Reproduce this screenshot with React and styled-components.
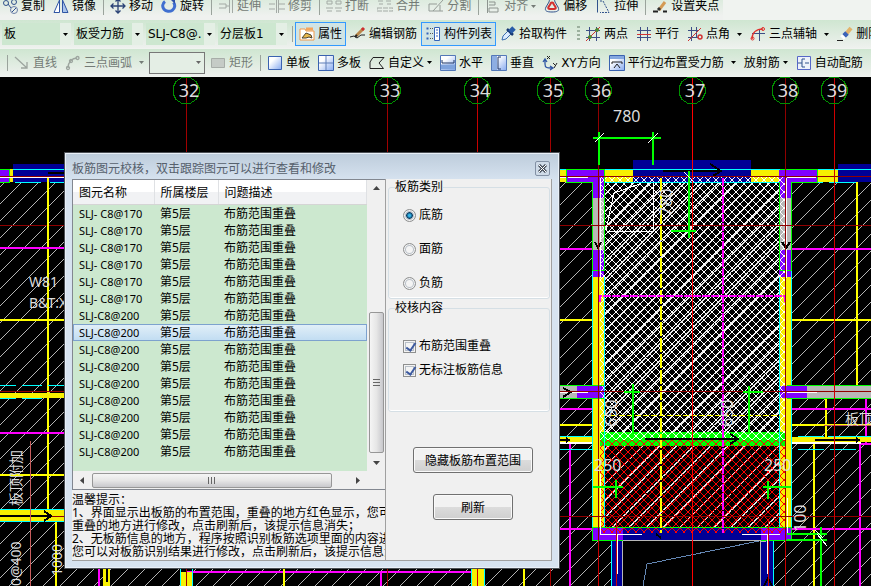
import React from "react";
import styled, { createGlobalStyle, css } from "styled-components";

const icons = {
  copy: (
    <g fill="none" stroke="#31528c">
      <circle cx="4" cy="5" r="2.5" />
      <circle cx="12" cy="4" r="2.5" />
      <circle cx="12" cy="12" r="3.5" stroke="#6b7fa8" />
      <path d="M6 6l3 4M10 14l4-4" />
    </g>
  ),
  mirror: (
    <g fill="#fff" stroke="#2f55a4">
      <path d="M6.5 2v12.5H1z" />
      <path d="M9.5 2v12.5H15z" fill="#a9c4ea" />
    </g>
  ),
  move: (
    <path
      d="M8 1v14M1 8h14M5.500 3.500L8 1l2.500 2.500M5.500 12.500L8 15l2.500-2.500M3.500 5.500L1 8l2.500 2.500M12.500 5.500L15 8l-2.500 2.500"
      fill="none"
      stroke="#2a4275"
      strokeWidth="1.300"
    />
  ),
  rotate: (
    <g fill="none" stroke="#3f6fd0" strokeWidth="3">
      <path d="M4 3.500a6 5.500 0 1 0 8.500 1" />
      <path d="M9 1h5v5z" fill="#2c50a8" stroke="none" />
    </g>
  ),
  extend: (
    <path d="M1 6h7v4H1M11.500 2v13M14.500 2v13M8 8h3" fill="none" stroke="#a3aaa5" />
  ),
  trim: (
    <path d="M0 6h6M10 6h6M0 11h6M10 11h6M7.500 1v14M9.500 1v14" fill="none" stroke="#a3aaa5" />
  ),
  breakLine: (
    <path
      d="M1 3h5v3H1zM10 3h5v3h-5zM0 10h7M9 10h7M1 13h5M10 13h5"
      fill="none"
      stroke="#a3aaa5"
    />
  ),
  merge: (
    <path
      d="M1 3h6M9 3h6M2 6h4M10 6h4M0 10h16v3H0z"
      fill="none"
      stroke="#a3aaa5"
      strokeDasharray="5 1"
    />
  ),
  split: (
    <path d="M1 6h8M1 13h14M15 2L5 13M1 6v7M12 7v6" fill="none" stroke="#959c97" />
  ),
  align: (
    <path d="M2.500 1v14M4 4h6v3H4M4 10h9v4H4z" fill="none" stroke="#8d948f" />
  ),
  offset: (
    <g fill="none">
      <path d="M5 4c0-4 6-4 6 0l3 5c2 4-1 5-6 5S0 13 2 9z" stroke="#31528c" />
      <path d="M6.500 6c0-2 3-2 3 0l2 3c1 2-1 2-3.500 2S3.500 11 4.500 9z" stroke="#d32f2f" strokeWidth="2" />
    </g>
  ),
  stretch: (
    <g fill="none" stroke="#31528c">
      <path d="M2.500 1v13.500" />
      <path d="M5 3h3l6 11.500H5" strokeDasharray="2 1" />
    </g>
  ),
  grip: (
    <g>
      <path d="M1 13.500h5M11 13.500h4" stroke="#222" strokeWidth="2" />
      <path d="M7 12l6-8" stroke="#d49a54" strokeWidth="3" />
      <path d="M6 12l2-2" stroke="#333" strokeWidth="3" />
    </g>
  ),
  props: (
    <g>
      <path d="M1 3h5l1 2h8v9H1z" fill="#fff" stroke="#f09a4a" />
      <path d="M7 1.500h7v3H7z" fill="#f5a55b" />
      <path d="M3 12l4-5 5 2 1 3-3-1-3 1z" fill="#e7b84d" stroke="#4a4030" />
    </g>
  ),
  edit: (
    <g fill="none">
      <path d="M0 11l4-1 3 2 4-3h4" stroke="#222" />
      <path d="M6 10l7-7" stroke="#b9874a" strokeWidth="3" />
      <path d="M12 4l2-2" stroke="#ce2f2f" strokeWidth="3" />
      <path d="M5 11l2-2" stroke="#222" strokeWidth="2" />
    </g>
  ),
  list: (
    <g>
      <path d="M1.500 2.500h2M1.500 7.500h2M1.500 12.500h2" stroke="#3564b8" strokeWidth="2" />
      <path d="M5 2.500h3M5 7.500h3M5 12.500h3" stroke="#555" strokeDasharray="1 1" />
      <path d="M9.500 1.500h5v13h-5z" fill="#fff" stroke="#3564b8" />
      <path d="M11 4h2M11 7h2M11 10h2" stroke="#3564b8" />
    </g>
  ),
  picker: (
    <g>
      <path d="M2 14l1-4 6-6 3 3-6 6z" fill="#dcecff" stroke="#3c6dae" />
      <path d="M7 3l6 6" stroke="#17376e" strokeWidth="2.500" />
      <path d="M10 6l4-4" stroke="#285ca8" strokeWidth="5" />
    </g>
  ),
  twoPoint: (
    <g fill="none" stroke="#3d4f86">
      <path d="M4.500 1v14M11.500 1v14M1 4.500h14M1 11.500h14" />
      <path d="M1 15L15 1" stroke="#d13232" />
      <circle cx="5" cy="11" r="1.500" fill="#4c8b35" stroke="#4c8b35" />
      <circle cx="12" cy="4" r="1.500" fill="#4c8b35" stroke="#4c8b35" />
    </g>
  ),
  parallel: (
    <g fill="none" stroke="#3d4f86">
      <path d="M4.500 1v14M11.500 1v14M1 11.500h14M1 4.500h14" />
      <path d="M1 8.500h14" stroke="#d13232" />
    </g>
  ),
  angle: (
    <g fill="none" stroke="#3d4f86">
      <path d="M4.500 1v14M9.500 1v10M1 4.500h10M1 11.500h10" />
      <path d="M1 15L14 2" stroke="#d13232" />
      <circle cx="13" cy="11" r="2" stroke="#d13232" strokeWidth="1.500" />
    </g>
  ),
  threePoint: (
    <g fill="none" stroke="#3d4f86">
      <path d="M9.500 3v12M2 7.500h13" />
      <path d="M2 13c0-6 4-10 11-10" stroke="#e0322d" strokeWidth="1.500" />
      <circle cx="2.500" cy="12.500" r="1.500" stroke="#e0322d" />
      <circle cx="13" cy="3" r="1.500" stroke="#e0322d" />
    </g>
  ),
  erase: (
    <g>
      <path d="M0 14.500h6" stroke="#222" />
      <path d="M9 8L14 2" stroke="#e3b36a" strokeWidth="4" />
      <path d="M7 10l3-3" stroke="#3d63b8" strokeWidth="5" />
      <path d="M5 12l2-2" stroke="#fff" strokeWidth="5" />
    </g>
  ),
  line: (
    <path d="M1 2l12 11M13 7v6H7" fill="none" stroke="#9da59f" strokeWidth="1.300" />
  ),
  arc: (
    <g fill="none" stroke="#9da59f" strokeWidth="1.300">
      <path d="M3 13C3 7 7 3 12 3" />
      <circle cx="3" cy="13" r="1.500" />
      <circle cx="6" cy="6" r="1.500" />
      <circle cx="12.500" cy="3" r="1.500" />
    </g>
  ),
  rect: <path d="M1.500 3.500h13v9h-13z" fill="#c5cbc6" stroke="#a7ada8" />,
  single: <path d="M1.500 1.500h13v13h-13z" fill="url(#iconBlue)" stroke="#3a62b0" />,
  multi: (
    <g>
      <path d="M.5.5h15v15H.5z" fill="url(#iconBlue)" stroke="#3a62b0" />
      <path d="M8 1v14M1 8h14" stroke="#5f7fb8" />
    </g>
  ),
  custom: <path d="M4 2.500h11L10 8l4.500 5.500H1V7z" fill="none" stroke="#222" />,
  horizontal: (
    <g>
      <path d="M.5.500h15v15H.5z" fill="url(#iconBlue)" stroke="#5378b8" />
      <path d="M1 9.500h14v5H1z" fill="#7fa3dc" />
      <path d="M2 5v3h12V5" fill="none" stroke="#1e3666" />
    </g>
  ),
  vertical: (
    <g>
      <path d="M.5.500h15v15H.5z" fill="url(#iconBlue)" stroke="#5378b8" />
      <path d="M1 1h5v14H1z" fill="#8daee2" />
      <path d="M10 2H7v12h3" fill="none" stroke="#1e3666" />
    </g>
  ),
  xy: (
    <g fill="none" stroke="#2f55a4">
      <path d="M3 5v4c0 4 2 4 7 4M1 7l2-3 2 3M8 11l3 2-3 2" strokeWidth="1.300" />
      <path d="M5 1l3 3M8 1L5 4M11 8l2 2M15 8l-3 5" stroke="#222" />
    </g>
  ),
  edge: (
    <g>
      <path d="M.5.500h15v15H.5z" fill="url(#iconBlue)" stroke="#3a62b0" />
      <path d="M1 1h14v3H1z" fill="#85a8df" />
      <path d="M3 9V7h10v2M5 13l3-4 3 4" fill="none" stroke="#222" />
    </g>
  ),
  auto: (
    <g fill="none">
      <path d="M1.500 1.500h13v13h-13z" fill="#eef2fb" stroke="#5667c8" />
      <path d="M9 4H6v8h3M2 8h4M9 8h4" stroke="#31528c" />
    </g>
  ),
};

const editTools = [
  { icon: "copy", label: "复制" },
  { icon: "mirror", label: "镜像" },
  { sep: true },
  { icon: "move", label: "移动" },
  { icon: "rotate", label: "旋转" },
  { sep: true },
  { icon: "extend", label: "延伸", disabled: true },
  { icon: "trim", label: "修剪", disabled: true },
  { sep: true },
  { icon: "breakLine", label: "打断", disabled: true },
  { icon: "merge", label: "合并", disabled: true },
  { icon: "split", label: "分割", disabled: true },
  { sep: true },
  { icon: "align", label: "对齐", disabled: true, arrow: "near" },
  { icon: "offset", label: "偏移" },
  { icon: "stretch", label: "拉伸" },
  { sep: true },
  { icon: "grip", label: "设置夹点" },
];

const memberTools = [
  { icon: "props", label: "属性", active: true },
  { icon: "edit", label: "编辑钢筋" },
  { icon: "list", label: "构件列表", active: true },
  { icon: "picker", label: "拾取构件" },
];

const axisTools = [
  { icon: "twoPoint", label: "两点" },
  { icon: "parallel", label: "平行" },
  { icon: "angle", label: "点角", arrow: "far" },
  { icon: "threePoint", label: "三点辅轴", arrow: "far" },
  { icon: "erase", label: "删除" },
];

const shapeTools = [
  { icon: "line", label: "直线", disabled: true },
  { icon: "arc", label: "三点画弧", disabled: true, arrow: "far" },
];

const slabTools = [
  { icon: "rect", label: "矩形", disabled: true },
  { sep: true },
  { icon: "single", label: "单板" },
  { icon: "multi", label: "多板" },
  { icon: "custom", label: "自定义", arrow: "near" },
  { icon: "horizontal", label: "水平" },
  { icon: "vertical", label: "垂直" },
  { icon: "xy", label: "XY方向" },
  { icon: "edge", label: "平行边布置受力筋", arrow: "far" },
  { label: "放射筋", arrow: "near" },
  { icon: "auto", label: "自动配筋" },
];

const selects = [
  { label: "构件类型", value: "板" },
  { label: "构件", value: "板受力筋" },
  { label: "钢筋", value: "SLJ-C8@." },
  { label: "分层", value: "分层板1" },
];

const problems = Array.from({ length: 15 }, (_, i) => ({
  name: i < 6 ? "SLJ- C8@170" : "SLJ-C8@200",
  floor: "第5层",
  issue: "布筋范围重叠",
  selected: i === 7,
}));

const axes = [
  { x: 186, n: "32", color: "#a00000" },
  { x: 387, n: "33", color: "#a00000" },
  { x: 477, n: "34", color: "#c80000" },
  { x: 550, n: "35", color: "#a00000" },
  { x: 598, n: "36", color: "#900000" },
  { x: 692, n: "37", color: "#ff0000" },
  { x: 785, n: "38", color: "#900000" },
  { x: 834, n: "39", color: "#d00000" },
];

// one-pixel steps keep the hatching sharp
const rising = (size, width = 1) =>
  Array.from({ length: size }, (_, i) => `M${i} ${size - 1 - i}h${width}v1h-${width}z`).join("");
const falling = (size) =>
  Array.from({ length: size }, (_, i) => `M${i} ${i}h1v1h-1z`).join("");

const Tools = ({ items }) =>
  items.map((item, i) =>
    item.sep ? (
      <Separator key={i} />
    ) : (
      <ToolButton key={i} type="button" disabled={item.disabled} $active={item.active}>
        {item.icon && <Icon viewBox="0 0 16 16">{icons[item.icon]}</Icon>}
        {item.label}
        {item.arrow && <Arrow viewBox="0 0 5 3" $far={item.arrow === "far"}><path d="M0 0h5L2.500 3z" /></Arrow>}
      </ToolButton>
    )
  );

const Toolbars = () => (
  <Header>
    <TopRow>
      <Tools items={editTools} />
    </TopRow>
    <Row>
      <Band>
        <SelectGroup>
          {selects.map((s) => (
            <SelectBox key={s.value}>
              <select aria-label={s.label} defaultValue={s.value}>
                <option>{s.value}</option>
              </select>
              <Drop><Arrow viewBox="0 0 5 3"><path d="M0 0h5L2.500 3z" /></Arrow></Drop>
            </SelectBox>
          ))}
        </SelectGroup>
        <Separator />
        <Tools items={memberTools} />
      </Band>
      <Band $grow>
        <Grip />
        <Tools items={axisTools} />
      </Band>
    </Row>
    <Row>
      <Band $grow>
        <Lead />
        <Separator />
        <Tools items={shapeTools} />
        <ShapeSelect>
          <select aria-label="画弧方式" disabled />
          <Drop><Arrow viewBox="0 0 5 3"><path d="M0 0h5L2.500 3z" /></Arrow></Drop>
        </ShapeSelect>
        <Tools items={slabTools} />
      </Band>
    </Row>
  </Header>
);

const yellow = "#f7f000";
const magenta = "#ff00ff";
const purple = "#8000ff";
const navy = "#000096";
const gray = "#b8b8b8";
const cyan = "#00ffff";
const green = "#00ff00";
const dark = "#900000";

const Plan = () => (
  <Drawing>
    <defs>
      <linearGradient id="iconBlue" x1="0" y1="0" x2="1" y2="1">
        <stop offset="0.3" stopColor="#fff" />
        <stop offset="1" stopColor="#86aaf0" />
      </linearGradient>
      <pattern id="hatch" width="17" height="17" patternUnits="userSpaceOnUse">
        <path d={rising(17)} fill="#b4b4b4" />
      </pattern>
      <pattern id="bold" width="17" height="17" patternUnits="userSpaceOnUse">
        <path d={rising(17, 2)} fill="#e4e4e4" />
      </pattern>
      <pattern id="cross" width="8" height="8" patternUnits="userSpaceOnUse">
        <path d={rising(8) + falling(8)} fill="#fff" />
      </pattern>
      <pattern id="crossRed" width="8" height="8" patternUnits="userSpaceOnUse">
        <path d={rising(8) + falling(8)} fill="#f00" />
      </pattern>
    </defs>
    <g transform="translate(0 -77)" fill="none" shapeRendering="crispEdges">
      <rect x="0" y="182" width="100%" height="404" fill="url(#hatch)" />

      {/* left side, behind the dialog */}
      <path d="M13 164h60v18H13z" fill={navy} />
      <path d="M0 170h9v12H0z" fill={purple} />
      <path d="M10 169h3v13h-3z" fill={yellow} />
      <path d="M0 169.500h9.500v13H0" stroke={green} />
      <path d="M13 169.500h60M15 182.500h26M50 182.500h20" stroke={cyan} />
      <path d="M48 172.500h20" stroke="#000" strokeWidth="2" />
      <path d="M0 176.500h66M0 225.500h66" stroke={dark} />
      <path d="M0 177.500h66" stroke="#fff" />
      <path d="M48 178v338M0 320h66M0 475h66M56 521v65" stroke="#ff0" strokeWidth="2" />
      <path d="M0 248h66M0 433h66" stroke={magenta} strokeWidth="2" />
      <path d="M0 393h66v5H0zM0 510h66v11H0z" fill={yellow} />
      <path d="M0 385.500h16M22 385.500h20M48 385.500h20M0 398.500h16M22 398.500h20M0 509.500h66M0 521.500h66" stroke={cyan} />
      <path d="M0 391.500h66M0 516.500h66" stroke={dark} />
      <path d="M0 515.500h50M44 511l7 5-7 5" stroke="#000" strokeWidth="2" />
      <path d="M30.500 441v145" stroke="#c85c5c" />

      {/* strip under the dialog */}
      <path d="M99 560v26M186 572h291M381 572v14" stroke={magenta} strokeWidth="2" />
      <path d="M103 560h7v26h-7zM181 572h11v14h-11zM472 560h12v26h-12z" fill={yellow} />
      <path d="M107 565v17" stroke="#000" strokeWidth="2" />
      <path d="M180.500 560v26M192.500 560v26M471.500 560v26M484.500 560v26" stroke={cyan} />
      <path d="M284 560v26M524 560v26" stroke="#ff0" strokeWidth="2" />

      {/* right side grid */}
      <path d="M558 320h40M786 320h400M857 182v210M558 425h34M791 425h400M826 392v46M814 443v143" stroke="#ff0" strokeWidth="2" />
      <path d="M558 249h34M791 249h400M558 409h34M791 409h400M570 443v143M860 586V444h12M866 444v-50h6M558 529h34M791 529h400" stroke={magenta} strokeWidth="2" />
      <path d="M824 425.500h80" stroke="#c85c5c" />
      <path d="M558 437h40v5h-40zM787 437h400v5H787z" fill={yellow} />
      <path d="M558 443h40M787 443h74" stroke="#fff" strokeWidth="2" />
      <path d="M558 436.500h34M798 436.500h26M828 436.500h60M558 449.500h34M798 449.500h26M830 449.500h26" stroke={cyan} />
      <path d="M558 440h10M815 440h42" stroke="#000" strokeWidth="2" />
      <path d="M566 437l5 3-5 3zM856 437l5 3-5 3z" fill="#000" />

      {/* bay between axes 36 and 38 */}
      <path d="M605 182h174v345H605z" fill="#000" />
      <path d="M558 170h8v12h-8zM605 170h174v12H605zM817 170h21v12h-21zM593 277h12v250h-12zM779 277h12v250h-12z" fill={yellow} />
      <path d="M633 160h118v22H633zM838 164h400v18H838z" fill={navy} />
      <path d="M567 170h37v12h-37zM593 182h11v16h-11zM779 170h38v12h-38zM779 182h12v16h-12zM593 250h11v27h-11zM779 250h12v27h-12z" fill={purple} />
      <path d="M593 198h11v52h-11zM779 198h12v52h-12zM558 386h19v12h-19zM807 386h400v12H807z" fill={gray} />
      <path d="M577 386h27v12h-27zM779 386h28v12h-28z" fill={purple} />
      <path d="M605 182h174v258H605z" fill="url(#bold)" />
      <path d="M600 432h185v14H600z" fill={green} />
      <path d="M600 177h185v263H600z" fill="url(#cross)" />
      <path d="M605 446h174v81H605z" fill="url(#bold)" />
      <path d="M611 540h12v46h-12zM761 540h12v46h-12zM623 528h138v12H623z" fill={navy} />
      <path d="M623 541h138v45H623z" fill="#000" />
      <path d="M593 528h30v12h-30zM761 528h30v12h-30z" fill={purple} />
      <path d="M600 440h185v93H600z" fill="url(#crossRed)" />
      <path d="M558 169.500h680M568 182.500h24M605 182.500h174M797 182.500h26M829 182.500h27M592.500 270v115M604.500 277v250M592.500 398v129M779.500 277v250M791.500 270v115M791.500 398v129M611.500 541v45M773.500 541v45" stroke={cyan} />
      <path d="M566.500 182.500v-13h38v100M566.500 182.500h26v88h12M779.500 270v-88M779.500 169.500h38v13h-26v88h-12M558 385.500h46M558 398.500h46M787 385.500h400M787 398.500h400M592.500 527.500h199v13h-199z" stroke={green} />
      <path d="M622.500 541v45M765.500 541h-5v45M623 540.500h138" stroke={gray} />
      <path d="M558 177.500h8M568 177.500h20M600.500 178v100M786.500 178v100M787 177.500h29M558 392.500h30M787 392.500h30M600 534.500h42M742 534.500h38M617.500 534v40M767.500 534v40M600.500 534v-60M787.500 534v-36" stroke="#fff" />
      <path d="M661 178v355" stroke="#ff0" strokeWidth="2" strokeDasharray="14 2" />
      <path d="M603 415h177" stroke="#ff0" strokeWidth="1" strokeDasharray="6 2" />
      <path d="M723 178v355M600 302v-6h185v6" stroke={magenta} strokeWidth="2" strokeDasharray="8 1" />
      <path d="M663 171h58M710 164l11 7-8 5" stroke="#000" strokeWidth="2" />
      <path d="M645 439h92M730 434l8 5-8 5" stroke="#000" strokeWidth="2" />
      <path d="M563 388l8 4-8 5M595 242l3 6 3-6M782 242l4 6 4-6M656 534l5 4M764 586l4-8 4 8" stroke="#000" strokeWidth="2" />
      <path d="M558 176.500h700M558 225.500h700M558 391.500h700M558 516.500h700" stroke={dark} />
      <path d="M606.500 231.500h47v-49M640 184l-26 9-8 37" stroke="#fff" />
      <path d="M643 586l4-22 112-23" stroke="#6487b4" />

      {/* axes */}
      {axes.map((a) => (
        <g key={a.n}>
          <path d={`M${a.x}.5 78V586`} stroke={a.color} />
          <path
            d={`M${a.x - 4} 77.500h8l6 4 3 6v6l-3 6-6 4h-8l-6-4-3-6v-6l3-6z`}
            stroke="#009000"
          />
        </g>
      ))}
      <path d="M598.500 541v45M785.500 541v45M616.500 520v66M768.500 520v66" stroke="#c80000" />

      {/* dimensions */}
      <path d="M593 138h68M599 132v33M653 132v33M689 171v67M671 231h25M633 384v50M624 392h16M749 386v48M743 392h20M616 480v18M593 487h30M768 481v18M763 487h28M787 534h40M787 540h40M821 527v59" stroke={green} strokeWidth="2" />
      <path d="M595 142l9-9M648 143l10-10M684 172l10 10M817 534l10 12M815 530l8 8" stroke="#fff" />
    </g>
    <PlanText transform="translate(0 -77)">
      {axes.map((a) => (
        <text key={a.n} x={a.x + 3} y="97" fontSize="18" textAnchor="middle">{a.n}</text>
      ))}
      <text x="613" y="122" fontSize="16">780</text>
      <text x="29" y="287" fontSize="14">W81</text>
      <text x="29" y="308" fontSize="14">B&amp;T:X</text>
      <text x="594" y="471" fontSize="16">250</text>
      <text x="764" y="471" fontSize="16">250</text>
      <text x="845" y="424" fontSize="14">板顶附加</text>
      <text transform="translate(21 506) rotate(-90)" fontSize="14">板顶附加</text>
      <text transform="translate(21 586) rotate(-90)" fontSize="14">0@400</text>
      <text transform="translate(62 576) rotate(-90)" fontSize="14">1000</text>
      <text transform="translate(672 216) rotate(-90)" fontSize="16">780</text>
      <text transform="translate(617 427) rotate(-90)" fontSize="16">650</text>
      <text transform="translate(733 427) rotate(-90)" fontSize="16">650</text>
      <text transform="translate(806 532) rotate(-90)" fontSize="16">100</text>
    </PlanText>
  </Drawing>
);

const CheckDialog = () => (
  <Dialog role="dialog" aria-labelledby="dialog-title">
    <TitleBar>
      <Title id="dialog-title">板筋图元校核，双击跟踪图元可以进行查看和修改</Title>
      <CloseButton type="button" aria-label="关闭">
        <svg width="9" height="9" viewBox="0 0 9 9">
          <path d="M1 1l7 7M8 1L1 8" stroke="#444c58" strokeWidth="3" />
          <path d="M1 1l7 7M8 1L1 8" stroke="#fff" />
        </svg>
      </CloseButton>
    </TitleBar>
    <DialogBody>
      <LeftPane>
        <ListBox>
          <ListView>
            <Table>
              <colgroup>
                <NameCol />
                <FloorCol />
                <col />
              </colgroup>
              <thead>
                <tr>
                  <th>图元名称</th>
                  <th>所属楼层</th>
                  <th>问题描述</th>
                </tr>
              </thead>
              <tbody>
                {problems.map((p, i) => (
                  <ProblemRow key={i} $selected={p.selected}>
                    <NameCell>{p.name}</NameCell>
                    <td>{p.floor}</td>
                    <td>{p.issue}</td>
                  </ProblemRow>
                ))}
              </tbody>
            </Table>
          </ListView>
          <VScroll>
            <ScrollArrow viewBox="0 0 9 9"><path d="M1 6h7L4.500 2z" /></ScrollArrow>
            <VThumb><svg width="7" height="8"><path d="M0 .5h7M0 3.500h7M0 6.500h7" stroke="#666" /></svg></VThumb>
            <ScrollArrow viewBox="0 0 9 9"><path d="M1 3h7L4.500 7z" /></ScrollArrow>
          </VScroll>
          <HScroll>
            <ScrollArrow viewBox="0 0 9 9"><path d="M6 1v7L2 4.500z" /></ScrollArrow>
            <HThumb><svg width="8" height="7"><path d="M.5 0v7M3.500 0v7M6.500 0v7" stroke="#666" /></svg></HThumb>
            <ScrollArrow viewBox="0 0 9 9"><path d="M3 1v7l4-3.500z" /></ScrollArrow>
          </HScroll>
        </ListBox>
        <Tips>
          <p>温馨提示：</p>
          <p>1、界面显示出板筋的布置范围，重叠的地方红色显示，您可以对</p>
          <p>重叠的地方进行修改，点击刷新后，该提示信息消失；</p>
          <p>2、无板筋信息的地方，程序按照识别板筋选项里面的内容进行，</p>
          <p>您可以对板筋识别结果进行修改，点击刷新后，该提示信息消失</p>
        </Tips>
      </LeftPane>
      <RightPane>
        <Group $gap={20} $height={120}>
          <legend>板筋类别</legend>
          <Option><input type="radio" name="kind" defaultChecked />底筋</Option>
          <Option><input type="radio" name="kind" />面筋</Option>
          <Option><input type="radio" name="kind" />负筋</Option>
        </Group>
        <Group $gap={10} $height={112}>
          <legend>校核内容</legend>
          <Spacer />
          <Option><input type="checkbox" defaultChecked />布筋范围重叠</Option>
          <Option><input type="checkbox" defaultChecked />无标注板筋信息</Option>
        </Group>
        <Actions>
          <PushButton type="button" $width={120}>隐藏板筋布置范围</PushButton>
          <PushButton type="button" $width={80}>刷新</PushButton>
        </Actions>
      </RightPane>
    </DialogBody>
  </Dialog>
);

const App = () => (
  <Page>
    <GlobalStyle />
    <Toolbars />
    <Canvas>
      <Plan />
      <CheckDialog />
    </Canvas>
  </Page>
);

export default App;

const GlobalStyle = createGlobalStyle`
  * {
    box-sizing: border-box;
  }

  body {
    margin: 0;
    overflow: hidden;
    font-family: "Noto Sans", "Noto Sans CJK SC", sans-serif;
    font-size: 12px;
    color: #000;
  }

  button, select, input {
    font: inherit;
    color: inherit;
    margin: 0;
  }

  p {
    margin: 0;
  }
`;

const Page = styled.div`
  display: flex;
  flex-direction: column;
  height: 100vh;
`;

const Header = styled.header`
  flex: none;
  padding-bottom: 1px;
  background: #f0f3f0;
  font-family: "DejaVu Sans", "Noto Sans CJK SC", sans-serif;
  white-space: nowrap;
  overflow: hidden;
`;

/* the first bar is partly scrolled out at the top left */
const TopRow = styled.div`
  display: flex;
  align-items: flex-start;
  width: max-content;
  height: 26px;
  margin: -6px 0 0 -2px;
  background: linear-gradient(#d6e9d8, #eff1ef 22px);
`;

const Row = styled.div`
  display: flex;
  height: 28px;
  margin-bottom: 1px;

  &:last-child {
    height: 27px;
    margin: 0;
  }
`;

const Band = styled.div`
  display: flex;
  align-items: center;
  flex: ${(props) => (props.$grow ? "1" : "none")};
  background: linear-gradient(#cfe6d1, #eef1ee);
`;

const SelectGroup = styled.div`
  display: flex;
  gap: 3px;
  padding: 0 2px;
`;

const SelectBox = styled.div`
  display: grid;
  grid-template-columns: 1fr 11px;
  width: 69px;
  height: 22px;
  background: #cde7d0;

  select {
    appearance: none;
    grid-area: 1 / 1 / 2 / 3;
    width: 100%;
    padding: 0 2px;
    border: none;
    background: none;
  }
`;

const Drop = styled.span`
  display: flex;
  align-items: center;
  justify-content: center;
  grid-area: 1 / 2;
  background: #e4efe5;
  pointer-events: none;
`;

const ShapeSelect = styled(SelectBox)`
  width: 56px;
  margin: 0 1px;
  border: 1px solid #777;
  background: #e4eee5;
  color: #666;
`;

const Separator = styled.span`
  flex: none;
  width: 1px;
  height: 16px;
  margin: 0 2px 0 3px;
  align-self: center;
  background: #9aa39c;
`;

const Lead = styled.span`
  width: 4px;
`;

const Grip = styled.span`
  width: 3px;
  height: 16px;
  margin: 0 1px 0 6px;
  background: repeating-linear-gradient(#9cb09e 0 2px, transparent 2px 4px);
`;

const ToolButton = styled.button`
  display: flex;
  align-items: center;
  flex: none;
  gap: 3px;
  height: 24px;
  padding: 0 3px;
  border: 1px solid transparent;
  background: none;
  line-height: 16px;

  &:disabled {
    color: #747b76;
  }

  ${(props) =>
    props.$active &&
    css`
      border-color: #3399ff;
      background: #d0e4e4;
    `}
`;

const Icon = styled.svg`
  width: 16px;
  height: 16px;
`;

const Arrow = styled.svg`
  width: 5px;
  height: 3px;
  margin-left: ${(props) => (props.$far ? "4px" : "0")};
  fill: currentColor;
`;

const Canvas = styled.main`
  position: relative;
  flex: 1;
  min-height: 0;
  overflow: hidden;
  background: #000;
`;

const Drawing = styled.svg`
  display: block;
  width: 100%;
  height: 100%;
`;

const PlanText = styled.g`
  fill: #dcdcdc;
`;

const Dialog = styled.section`
  position: absolute;
  left: 64px;
  top: 75px;
  width: 496px;
  padding: 0 7px 7px;
  border: 1px solid #4b4f55;
  background: linear-gradient(#bdccdb, #d7e3f0 28px);
  box-shadow: inset 0 0 0 1px #e9f0f8;
`;

const TitleBar = styled.div`
  display: flex;
  align-items: center;
  justify-content: space-between;
  height: 26px;
  padding: 4px 2px 0 0;
`;

const Title = styled.h1`
  margin: 0;
  font-size: 12px;
  font-weight: 400;
  color: #56606c;
`;

const CloseButton = styled.button`
  display: flex;
  align-items: center;
  justify-content: center;
  width: 15px;
  height: 15px;
  padding: 0;
  border: 1px solid #8391a5;
  border-radius: 2px;
  background: #cfdbe8;
`;

const DialogBody = styled.div`
  display: flex;
  height: 382px;
  border: 1px solid #a0a0a0;
  border-width: 0 1px 1px 0;
  background: #f0f0f0;
`;

const LeftPane = styled.div`
  display: flex;
  flex-direction: column;
  flex: none;
  width: 314px;
  border-right: 1px solid #a0a0a0;
`;

const ListBox = styled.div`
  display: grid;
  grid-template: 291px 18px / 1fr 18px;
  border: 1px solid #828790;
  border-right: none;
  background: #f0f0f0;
`;

const ListView = styled.div`
  background: #cce8cf;
`;

const Table = styled.table`
  width: 100%;
  table-layout: fixed;
  border-collapse: collapse;

  th,
  td {
    padding: 0 0 0 6px;
    text-align: left;
    font-weight: 400;
    white-space: nowrap;
  }

  th {
    height: 24px;
    border-right: 1px solid #dfe1e4;
    border-bottom: 1px solid #d5d5d5;
    background: linear-gradient(#fff 50%, #f1f2f4 50%);
  }

  td {
    height: 17px;
    line-height: 17px;
  }
`;

const NameCol = styled.col`
  width: 81px;
`;

const FloorCol = styled.col`
  width: 64px;
`;

const NameCell = styled.td`
  font-size: 11px;
`;

const ProblemRow = styled.tr`
  ${(props) =>
    props.$selected &&
    css`
      background: linear-gradient(#e3f0f8, #c0dcf2);
      outline: 1px solid #7da2ce;
      outline-offset: -1px;
    `}
`;

const ScrollArrow = styled.svg`
  flex: none;
  width: 9px;
  height: 9px;
  fill: #444;
`;

const VScroll = styled.div`
  display: flex;
  flex-direction: column;
  align-items: center;
  padding: 4px 0;
`;

const Thumb = styled.div`
  display: flex;
  align-items: center;
  justify-content: center;
  border: 1px solid #979797;
  border-radius: 2px;
`;

const VThumb = styled(Thumb)`
  width: 15px;
  height: 141px;
  margin: auto 0 5px;
  background: linear-gradient(90deg, #f5f5f5, #e6e6e6 50%, #c8c8cc);
`;

const HScroll = styled.div`
  display: flex;
  align-items: center;
  padding: 0 5px;
`;

const HThumb = styled(Thumb)`
  width: 240px;
  height: 15px;
  margin: 0 auto 0 5px;
  background: linear-gradient(#f5f5f5, #e6e6e6 50%, #c8c8cc);
`;

const Tips = styled.div`
  flex: 1;
  padding-top: 3px;
  overflow: hidden;
  white-space: nowrap;
  line-height: 13px;
`;

const RightPane = styled.div`
  display: flex;
  flex-direction: column;
  flex: 1;
  padding: 0 1px 0 2px;
`;

const Group = styled.fieldset`
  display: flex;
  flex-direction: column;
  gap: ${(props) => props.$gap}px;
  height: ${(props) => props.$height}px;
  min-width: 0;
  margin: 0 0 1px;
  padding: 13px 14px 0;
  border: 1px solid #d5dfe5;
  border-radius: 3px;
  box-shadow: inset 0 -1px 0 #fff;

  legend {
    margin-left: -8px;
    padding: 0;
    line-height: 16px;
  }
`;

const Spacer = styled.span`
  height: 0;
`;

const Option = styled.label`
  display: flex;
  align-items: center;
  gap: 3px;
  line-height: 14px;

  input {
    appearance: none;
    width: 13px;
    height: 13px;
    border: 1px solid #8e8f8f;
    background: #f4f4f4;
    box-shadow: inset 0 0 0 1px #f4f4f4, inset 0 0 0 2px #b9c0c8;
  }

  input[type="radio"] {
    border-radius: 50%;
  }

  input[type="radio"]:checked {
    background: radial-gradient(circle, #35b5e8 0 1px, #0b3c63 3px, #f4f4f4 4px);
  }

  input[type="checkbox"]:checked::before {
    content: "";
    display: block;
    width: 4px;
    height: 8px;
    margin: 0 0 0 4px;
    border: solid #3d5aa0;
    border-width: 0 2px 2px 0;
    transform: rotate(35deg);
  }
`;

const Actions = styled.div`
  display: flex;
  flex-direction: column;
  align-items: center;
  gap: 21px;
  padding: 34px 0 0 8px;
`;

const PushButton = styled.button`
  width: ${(props) => props.$width}px;
  height: 26px;
  padding: 0;
  border: 1px solid #707070;
  border-radius: 3px;
  background: linear-gradient(#f2f2f2 50%, #dcdcdc 50%, #cfcfcf);
  box-shadow: inset 0 0 0 1px #fafafa;
`;
